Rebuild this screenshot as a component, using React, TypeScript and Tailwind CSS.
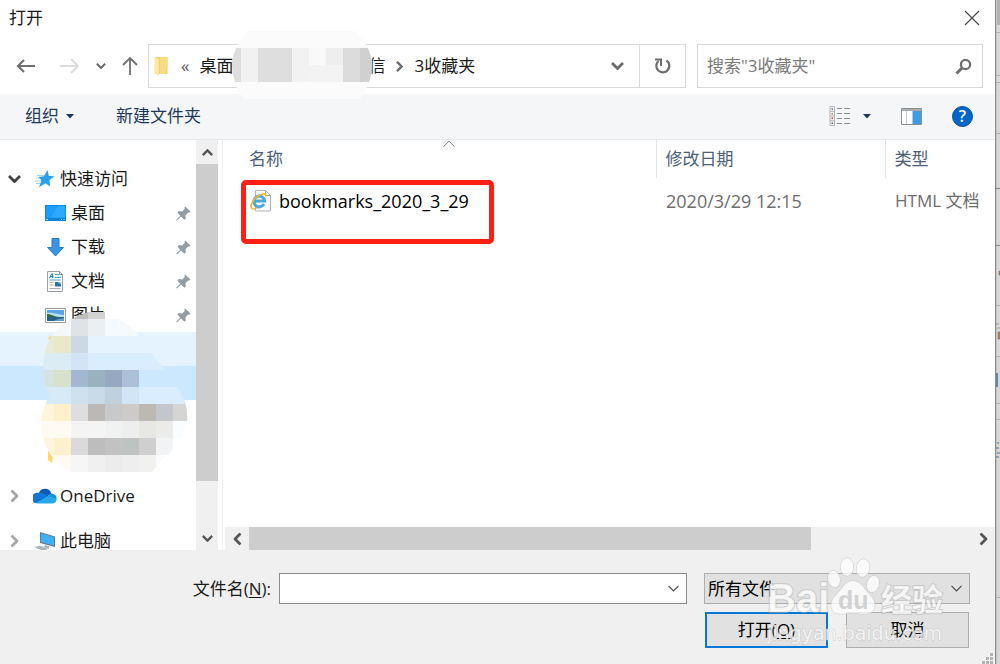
import type { ReactNode } from 'react';

type IconProps = { className?: string };

const quickItems: { label: string; icon: ReactNode }[] = [
  { label: '桌面', icon: <DesktopIcon /> },
  { label: '下载', icon: <DownloadIcon /> },
  { label: '文档', icon: <DocumentIcon /> },
  { label: '图片', icon: <PictureIcon /> },
];

// x, y, width, fill: one run of equal cells in the censored part of the tree
const treeMosaic: [number, number, number, string][] = [
  [20, 0, 10, '#d3d3d3'], [30, 0, 17, '#c1bfbd'], [47, 0, 17, '#d3d3d3'],
  [0, 7, 30, '#f4f6f8'], [30, 7, 17, '#dfe3e6'], [47, 7, 17, '#ebeff2'], [64, 7, 84, '#f5faff'],
  [0, 24, 13, '#e7ecd9'], [13, 24, 17, '#e9e8c9'], [30, 24, 17, '#ccd9e5'], [47, 24, 101, '#e5f3ff'],
  [0, 41, 30, '#dbecf5'], [30, 41, 17, '#d3e5f4'], [47, 41, 101, '#d9edff'],
  [0, 58, 13, '#d5e3df'], [13, 58, 17, '#d8e1cc'], [30, 58, 17, '#a3b8d0'], [47, 58, 17, '#9ab1c0'],
  [64, 58, 17, '#96a9c1'], [81, 58, 17, '#acc1d9'], [98, 58, 50, '#cce8ff'],
  [0, 75, 30, '#d8eaf5'], [30, 75, 17, '#cfe0ef'], [47, 75, 17, '#c9dae8'], [64, 75, 17, '#bfd1df'],
  [81, 75, 17, '#d1e5f6'], [98, 75, 50, '#d9edff'],
  [0, 92, 13, '#fff5db'], [13, 92, 17, '#fdf0cb'], [30, 92, 17, '#dedede'], [47, 92, 17, '#bbb8b5'],
  [64, 92, 17, '#c8c9cb'], [81, 92, 17, '#cdcbc9'], [98, 92, 17, '#bcb9b5'], [115, 92, 17, '#c3c7cb'], [132, 92, 16, '#d5d5d4'],
  [0, 109, 30, '#fffaf2'], [30, 109, 34, '#f4f4f4'], [64, 109, 17, '#eff2f1'], [81, 109, 17, '#eeeeee'],
  [98, 109, 17, '#e7e7e4'], [115, 109, 17, '#ebebea'], [132, 109, 16, '#fafdff'],
  [0, 126, 13, '#fff5df'], [13, 126, 17, '#fdf0cd'], [30, 126, 17, '#dadada'], [47, 126, 17, '#bdbdbd'],
  [64, 126, 17, '#c2c2c2'], [81, 126, 17, '#bec2c0'], [98, 126, 17, '#cfcfcf'], [115, 126, 17, '#f1f3f5'],
  [0, 143, 30, '#fffbf4'], [30, 143, 17, '#f6f6f6'], [47, 143, 17, '#f0f0f0'], [64, 143, 17, '#ececec'],
  [81, 143, 17, '#eeeeee'], [98, 143, 17, '#f1f2ef'], [115, 143, 17, '#f9fbfd'],
];

const pathMosaic: [number, number, number, number, string][] = [
  [0, 17, 9, 34, '#dedede'], [9, 17, 17, 34, '#f1f1f1'], [26, 17, 34, 34, '#dedede'],
  [60, 17, 17, 34, '#f2f2f2'], [77, 17, 17, 17, '#f9f9f9'], [77, 34, 34, 17, '#f3f3f3'],
  [94, 17, 17, 17, '#eeeeee'], [111, 17, 17, 34, '#dcdcdc'], [128, 17, 12, 34, '#d0d0d0'],
];

export default function App() {
  return (
    <div className="flex h-screen min-h-[480px] overflow-hidden bg-white font-['Open_Sans','Noto_Sans_CJK_SC',sans-serif] text-[17px] leading-6 text-[#1a1a1a]">
      <div className="relative flex min-w-0 flex-1 flex-col">
        <TitleBar />
        <NavBar />
        <Toolbar />
        <div className="flex min-h-0 flex-1">
          <Sidebar />
          <FileList />
        </div>
        <Footer />
      </div>
      <WindowBehind />
    </div>
  );
}

function TitleBar() {
  return (
    <header className="flex h-9 shrink-0 items-center justify-between pr-[15px] pl-[9px]">
      <h1>打开</h1>
      <button aria-label="关闭" className="p-0">
        <svg width="16" height="16" viewBox="0 0 16 16" stroke="#444" strokeWidth="1.1">
          <path d="M1 1l14 14M15 1L1 15" />
        </svg>
      </button>
    </header>
  );
}

function NavBar() {
  return (
    <nav className="flex h-[58px] shrink-0 items-center pt-2 pr-3 pb-[6px]">
      <div className="flex w-[148px] shrink-0 items-center pl-4">
        <button aria-label="后退">
          <svg width="20" height="18" viewBox="0 0 20 18" fill="none" stroke="#707070" strokeWidth="2.2">
            <path d="M19 9H2M8 3L2 9l6 6" />
          </svg>
        </button>
        <button aria-label="前进" className="ml-6">
          <svg width="20" height="18" viewBox="0 0 20 18" fill="none" stroke="#dcdcdc" strokeWidth="2">
            <path d="M0 9h18M11 2l7 7-7 7" />
          </svg>
        </button>
        <button aria-label="最近浏览的位置" className="ml-4">
          <Chevron className="h-[6px] w-[10px] text-[#6a6a6a]" />
        </button>
        <button aria-label="上移" className="ml-4">
          <svg width="16" height="20" viewBox="0 0 16 20" fill="none" stroke="#707070" strokeWidth="1.8">
            <path d="M8 19V2M1 9l7-7 7 7" />
          </svg>
        </button>
      </div>

      <div className="relative flex h-[44px] min-w-0 flex-1 items-center border border-[#d9d9d9]">
        <svg className="ml-[5px] shrink-0" width="15" height="20" viewBox="0 0 15 20">
          <path d="M1 1h12.500v17H1z" fill="#f5ce69" />
          <path d="M6 1h7.500v11H12v6H6z" fill="#f8dc84" />
          <path d="M0.500 1L5 3.500V20L0.500 17.500z" fill="#ffe9a2" />
        </svg>
        <span className="ml-3 leading-5 text-[#555]">«</span>
        <span className="ml-[10px]">桌面</span>
        <span className="ml-[135px]">信</span>
        <Chevron className="mx-[9px] h-[7px] w-[11px] -rotate-90 text-[#6a6a6a]" />
        <span>3收藏夹</span>
        <button aria-label="展开地址" className="ml-auto px-[15px]">
          <Chevron className="h-[8px] w-[13px] text-[#6a6a6a]" />
        </button>
        <button aria-label="刷新" className="flex h-full w-[46px] items-center justify-center border-l border-[#d9d9d9]">
          <svg width="18" height="18" viewBox="0 0 18 18" fill="none" stroke="#6d6d6d" strokeWidth="2.2">
            <path d="M12.500 3.500A6.500 6.500 0 1 1 4.500 4" />
            <path d="M1 2.500h6V9" strokeWidth="2" />
          </svg>
        </button>
        <svg className="absolute -top-[14px] left-[83px]" width="140" height="68" viewBox="0 0 140 68">
          <clipPath id="path-blob">
            <path d="M16 0H124Q140 18 140 34Q140 52 128 68H12Q0 52 0 34Q0 18 16 0z" />
          </clipPath>
          <g clipPath="url(#path-blob)" shapeRendering="crispEdges">
            <path d="M0 0h140v68H0z" fill="#fbfbfb" />
            {pathMosaic.map(([x, y, w, h, fill]) => (
              <rect key={`${x}-${y}`} x={x} y={y} width={w} height={h} fill={fill} />
            ))}
          </g>
        </svg>
      </div>

      <label className="ml-[11px] flex h-[44px] w-[286px] shrink-0 items-center border border-[#d9d9d9] pr-[10px] pl-[9px]">
        <input
          type="text"
          aria-label="搜索"
          placeholder={'搜索"3收藏夹"'}
          className="min-w-0 flex-1 bg-transparent outline-none placeholder:text-[#7a7a7a]"
        />
        <svg width="17" height="17" viewBox="0 0 17 17" fill="none" stroke="#6d6d6d">
          <circle cx="10.500" cy="6.500" r="4.600" strokeWidth="2.200" />
          <path d="M7 10L1.500 15.500" strokeWidth="3" />
        </svg>
      </label>
    </nav>
  );
}

function Toolbar() {
  return (
    <div className="flex h-[46px] shrink-0 items-center border-b border-[#e6e8ea] bg-[#f4f6f8] pr-[22px] pb-px pl-[25px] text-[#1e395b]">
      <button className="flex items-center gap-[7px]">
        组织
        <Triangle />
      </button>
      <button className="ml-[42px]">新建文件夹</button>
      <button aria-label="更改视图" className="ml-auto flex items-center gap-3">
        <svg width="22" height="20" viewBox="0 0 22 20" fill="none">
          <path d="M1 .5h4.500v19H1zM1 5.300h4.500M1 10h4.500M1 14.700h4.500" stroke="#b5b5b5" />
          <path d="M8 2.500h5M15 2.500h6M8 7.500h5M15 7.500h6M8 12.500h5M15 12.500h6M8 17.500h5M15 17.500h6" stroke="#8d8d8d" />
          <path d="M2.500 2.200h1.500v1.500H2.500z" fill="#3c78b4" />
          <path d="M2.500 7h1.500v1.500H2.500z" fill="#b08a4a" />
          <path d="M2.500 11.500h1.500v1.500H2.500z" fill="#d0401c" />
          <path d="M2.500 16.500h1.500V18H2.500z" fill="#4a6a8a" />
        </svg>
        <Triangle />
      </button>
      <button aria-label="预览窗格" className="ml-[30px]">
        <svg width="21" height="17" viewBox="0 0 21 17">
          <path d="M.5.5h20v16H.5z" fill="#fff" stroke="#8a8f94" />
          <path d="M1 1h19v2H1z" fill="#a9adb1" />
          <path d="M5.500 3v13" stroke="#c5c8ca" />
          <path d="M11.500 3H20v13h-8.500z" fill="#3f9be6" />
        </svg>
      </button>
      <button
        aria-label="帮助"
        className="ml-[30px] flex size-[21px] items-center justify-center rounded-full border border-[#0b4f97] bg-[#0066cc] text-base leading-5 font-semibold text-white"
      >
        ?
      </button>
    </div>
  );
}

function Sidebar() {
  return (
    <aside className="flex w-[223px] shrink-0 border-r border-[#f0f0f0] pr-1">
      <div className="relative min-w-0 flex-1 overflow-hidden pt-[22px]">
        <TreeRoot label="快速访问" icon={<StarIcon />} open />
        <ul>
          {quickItems.map((item) => (
            <li key={item.label} className="flex h-[34px] items-center pr-[5px] pl-[45px]">
              <span className="flex w-[26px] items-center">{item.icon}</span>
              <span className="flex-1">{item.label}</span>
              <PinIcon />
            </li>
          ))}
          <li className="h-[34px] bg-[#e5f3ff]" />
          <li className="h-[34px] bg-[#cce8ff]" />
        </ul>
        <div className="mt-[79px] flex flex-col gap-[11px]">
          <TreeRoot label="OneDrive" icon={<CloudIcon />} />
          <TreeRoot label="此电脑" icon={<ComputerIcon />} />
        </div>
        <svg className="absolute top-[172px] left-[41px]" width="148" height="160" viewBox="0 0 148 160">
          <clipPath id="tree-blob">
            <path d="M47 0H64L76 7Q88 11 97 24V41H111L124 58V75H136Q148 92 146 109L141 126H132V137Q120 148 111 160H30Q0 144 0 109Q2 94 9 83Q0 68 3 45Q6 14 47 0z" />
          </clipPath>
          <path d="M7 26l4-3v8zM7 138l5 6-1 7-4-3z" fill="#fbd96b" />
          <g clipPath="url(#tree-blob)" shapeRendering="crispEdges">
            {treeMosaic.map(([x, y, w, fill]) => (
              <rect key={`${x}-${y}`} x={x} y={y} width={w} height={17} fill={fill} />
            ))}
          </g>
        </svg>
      </div>
      <div className="flex w-[22px] flex-col bg-[#f0f0f0]">
        <button aria-label="向上滚动" className="flex h-6 items-center justify-center">
          <Chevron className="h-[7px] w-[11px] rotate-180 text-[#555]" />
        </button>
        <div className="flex-1">
          <div className="h-7/8 bg-[#cdcdcd]" />
        </div>
        <button aria-label="向下滚动" className="flex h-6 items-center justify-center">
          <Chevron className="h-[7px] w-[11px] text-[#555]" />
        </button>
      </div>
    </aside>
  );
}

function TreeRoot({ label, icon, open }: { label: string; icon: ReactNode; open?: boolean }) {
  return (
    <div className="flex h-[34px] items-center pl-2">
      <button aria-label={label} className="flex w-[13px] justify-center">
        {open ? (
          <Chevron className="h-[8px] w-[13px] text-[#404040]" />
        ) : (
          <Chevron className="h-[8px] w-[13px] -rotate-90 text-[#a6a6a6]" />
        )}
      </button>
      <span className="ml-3 flex w-[27px] items-center">{icon}</span>
      <span>{label}</span>
    </div>
  );
}

function FileList() {
  return (
    <main className="relative flex min-w-0 flex-1 flex-col pl-[2px]">
      <table className="w-full table-fixed text-left">
        <thead>
          <tr className="h-[38px] text-[#4c607a]">
            <th className="pl-6 font-normal">名称</th>
            <th className="w-[229px] border-l border-[#e5e5e5] pl-[9px] font-normal">修改日期</th>
            <th className="w-[110px] border-l border-[#e5e5e5] pl-[9px] font-normal">类型</th>
          </tr>
        </thead>
        <tbody>
          <tr className="h-[46px] text-[#6d6d6d]">
            <td className="pl-[25px] text-lg leading-6 text-black">
              <span className="flex items-center gap-[7px]">
                <HtmlFileIcon />
                bookmarks_2020_3_29
              </span>
            </td>
            <td className="pl-[10px] text-lg leading-6">2020/3/29 12:15</td>
            <td className="pl-[10px] whitespace-nowrap">HTML 文档</td>
          </tr>
        </tbody>
      </table>
      <svg className="absolute top-0 left-[220px]" width="12" height="8" viewBox="0 0 12 8" fill="none" stroke="#7d7d7d">
        <path d="M.7 6.500L6 1.200l5.300 5.300" />
      </svg>
      <div className="absolute top-10 left-[18px] h-16 w-[253px] rounded-[5px] border-[5px] border-[#ff2015]" />
      <div className="mt-auto flex h-[23px] bg-[#f0f0f0]">
        <button aria-label="向左滚动" className="flex w-6 items-center justify-center">
          <Chevron className="h-[8px] w-[13px] rotate-90 text-[#555]" />
        </button>
        <div className="flex-1">
          <div className="h-full w-7/9 bg-[#cdcdcd]" />
        </div>
        <button aria-label="向右滚动" className="flex w-6 items-center justify-center">
          <Chevron className="h-[8px] w-[13px] -rotate-90 text-[#555]" />
        </button>
      </div>
    </main>
  );
}

function Footer() {
  return (
    <footer className="relative flex shrink-0 flex-col gap-2 bg-[#f0f0f0] pt-[23px] pr-[25px] pb-4">
      <div className="flex items-center">
        <label htmlFor="filename" className="ml-auto shrink-0">
          文件名(<u className="underline-offset-2">N</u>):
        </label>
        <div className="relative ml-2 w-[408px]">
          <input
            id="filename"
            type="text"
            className="block h-[31px] w-full border border-[#8c8c8c] bg-white pr-6 pl-1 outline-none"
          />
          <ThinChevron className="absolute top-3 right-2" />
        </div>
        <div className="relative ml-[17px] w-[266px]">
          <select
            aria-label="文件类型"
            className="block h-[31px] w-full appearance-none border border-[#adadad] bg-[#e1e1e1] pl-[3px] text-black outline-none"
          >
            <option>所有文件</option>
          </select>
          <ThinChevron className="absolute top-3 right-2" />
        </div>
      </div>
      <div className="flex justify-end gap-[18px] pr-px">
        <button className="h-9 w-[123px] border-2 border-[#0078d7] bg-[#e1e1e1] text-black">
          打开(<u className="underline-offset-2">O</u>)
        </button>
        <button className="h-9 w-[123px] border border-[#adadad] bg-[#e1e1e1] text-black">取消</button>
      </div>
      <Watermark />
      <svg className="absolute right-[2px] bottom-0" width="11" height="11" viewBox="0 0 11 11" fill="#b5b5b5">
        <path d="M8 0h3v3H8zM4 4h3v3H4zM8 4h3v3H8zM0 8h3v3H0zM4 8h3v3H4zM8 8h3v3H8z" />
      </svg>
    </footer>
  );
}

function Watermark() {
  return (
    <svg
      className="pointer-events-none absolute right-[46px] bottom-3 font-['Liberation_Sans','Noto_Sans_CJK_SC',sans-serif]"
      width="182"
      height="96"
      viewBox="0 0 182 96"
      fill="#fff"
      fillOpacity="0.75"
      stroke="#b0b0b0"
      strokeOpacity="0.5"
      paintOrder="stroke"
    >
      <ellipse cx="67" cy="23" rx="6" ry="8.500" transform="rotate(-12 67 23)" />
      <ellipse cx="80" cy="11" rx="6.500" ry="9" />
      <ellipse cx="96" cy="12" rx="6.500" ry="9" transform="rotate(10 96 12)" />
      <ellipse cx="106" cy="28" rx="6" ry="8.500" transform="rotate(15 106 28)" />
      <path d="M86 25c8 0 11 8 17 14 8 8 6 19-5 19-5 0-8-1-12-1s-7 1-12 1c-11 0-13-11-5-19 6-6 9-14 17-14z" />
      <text x="0" y="56" fontSize="40" fontWeight="700" strokeWidth="2">Bai</text>
      <text x="71" y="53" fontSize="25" fontWeight="700" fill="#c4c4c4" stroke="none">du</text>
      <text x="114" y="55" fontSize="31" fontWeight="700" strokeWidth="2">经验</text>
      <text x="0" y="84" fontSize="19" strokeWidth="1" className="font-['DejaVu_Sans',sans-serif]">jingyan.baidu.com</text>
    </svg>
  );
}

// Sliver of the browser window that shows past the right edge of the dialog
function WindowBehind() {
  return (
    <svg className="h-full w-[5px] shrink-0" viewBox="0 0 5 664" preserveAspectRatio="none">
      <path d="M0 0h5v664H0z" fill="#d8d8d8" />
      <path d="M0 0h5v25H0z" fill="#b4b4b4" />
      <path d="M0 0h1v664H0z" fill="#8e8e8e" />
      <path d="M1 0h1v664H1z" fill="#c2c2c2" />
      <path d="M1 32.500h4M1 75.500h4M1 82.500h4M1 133.500h4M1 305.500h4M1 356.500h4M1 403.500h4M1 419.500h4M1 597.500h4" stroke="#b0b0b0" />
      <path d="M0 188.500h5M0 245.500h5" stroke="#858585" />
      <path d="M4 271h1v4H4zM1 324h3M2 328h3M3 332h2v7H3z" fill="#b88a4a" stroke="#667" strokeWidth=".5" />
      <path d="M1 373h2v14H1z" fill="#5b87b0" />
      <path d="M2 443h2M1 448h3M2 453h3M1 457h3" stroke="#4f6f92" />
    </svg>
  );
}

function Chevron({ className }: IconProps) {
  return (
    <svg className={className} viewBox="0 0 13 8" fill="none" stroke="currentColor" strokeWidth="2.800">
      <path d="M1 1l5.500 5.500L12 1" />
    </svg>
  );
}

function ThinChevron({ className }: IconProps) {
  return (
    <svg className={className} width="11" height="7" viewBox="0 0 11 7" fill="none" stroke="#4a4a4a" strokeWidth="1.200">
      <path d="M.5.800l5 5 5-5" />
    </svg>
  );
}

function Triangle() {
  return (
    <svg width="8" height="5" viewBox="0 0 8 5" fill="#1e395b">
      <path d="M0 0h8L4 4.500z" />
    </svg>
  );
}

function StarIcon() {
  return (
    <svg className="ml-[2px]" width="20" height="18" viewBox="0 0 20 18">
      <path d="M2 5.500h8M1 8h8M0 11h7M1 13.500h5" stroke="#9bd2f5" strokeWidth="1" />
      <path d="M12.500 0l1.300 6 5.700.3-5 3.700.5 6.500-4.500-3.300-6.500 4 2.500-6.700L3.500 7l5.500-.700z" fill="#2aa0ea" />
    </svg>
  );
}

function DesktopIcon() {
  return (
    <svg width="21" height="16" viewBox="0 0 21 16">
      <path d="M0 0h21v16H0z" fill="#0d83dc" />
      <path d="M.8.800h19.400v12H.8z" fill="#1b9dfb" />
      <path d="M13 .800h7.200v12H6z" fill="#2fa9ff" />
      <path d="M1 14.500h2M16 14.500h1M18.500 14.500h1" stroke="#b9e0fb" />
    </svg>
  );
}

function DownloadIcon() {
  return (
    <svg width="21" height="19" viewBox="0 0 21 19">
      <path d="M7 .5h7v9h4.500l-8 8.500-8-8.500H7z" fill="#3a94e0" stroke="#2a7fca" />
    </svg>
  );
}

function DocumentIcon() {
  return (
    <svg width="21" height="21" viewBox="0 0 21 21" fill="none">
      <path d="M2.500.5h12l3 3v17h-15z" fill="#fdfdfd" stroke="#9da0a4" />
      <path d="M14.500.5v3h3" stroke="#8d9094" />
      <path d="M4.500 7l2.200-4h1v4M5.500 5.500h2" stroke="#1c86d1" strokeWidth="1.200" />
      <path d="M10 3.500h4M10 6.500h6M4.500 9h11" stroke="#42a5df" />
      <path d="M4.500 11.500h4M4.500 14h4M4.500 17.500h11" stroke="#a9adb1" />
      <path d="M10 11h6v4.500h-6z" fill="#2f6fa8" />
      <path d="M12.500 11H16v2.500z" fill="#9cc9ec" />
    </svg>
  );
}

function PictureIcon() {
  return (
    <svg width="21" height="15" viewBox="0 0 21 15">
      <path d="M.5.5h20v14H.5z" fill="#fff" stroke="#9a9a9a" />
      <path d="M2 2h17v11H2z" fill="#5aa5e8" />
      <path d="M2 5c5-1 9 1 17 2v2H2z" fill="#b8dcf2" />
      <path d="M2 6c4 0 6 2.500 12 3H2z" fill="#2f6b3a" />
      <path d="M2 9h17v4H2z" fill="#28618f" />
      <path d="M9 13c3-2 6-2.500 10-3v3z" fill="#5f9fc9" />
    </svg>
  );
}

function PinIcon() {
  return (
    <svg width="15" height="15" viewBox="0 0 15 15" fill="#929da6">
      <path d="M9.200.5l5.300 5-1.300 1.200-1-.2-2.700 2.700.3 3.300-1.500 1.300L5 10.500 1 14.500l-.8-.7 4-4L1.500 6.500 2.800 5l3.500.400L8.800 2.700 8.500 1.300z" />
    </svg>
  );
}

function CloudIcon() {
  return (
    <svg width="24" height="16" viewBox="0 0 24 16">
      <path d="M6 5a6.500 6.500 0 0 1 12.300.5L12 10 5 6z" fill="#0a5cb4" />
      <path d="M5.500 4.800c3-.6 5 .5 6.500 1.400L16 9 3 15.300A5.300 5.300 0 0 1 5.500 4.800z" fill="#0f78d4" />
      <path d="M18.300 5.500c4 .2 5.700 3.200 5.300 6L15 8.500c.8-1.600 1.800-2.800 3.300-3z" fill="#1490df" />
      <path d="M15 8l8.600 3.500c-.4 2.500-2 4-4.300 4H5.500c-1.200 0-2 0-2.800-.500z" fill="#28a8ea" />
    </svg>
  );
}

function ComputerIcon() {
  return (
    <svg width="23" height="19" viewBox="0 0 23 19">
      <path d="M7 0l15 4.500V15L7 11z" fill="#5f7a90" />
      <path d="M8 1.300l13 4v8.200L8 10z" fill="#3fb0f5" />
      <path d="M12 13l-1 3 4 1 2-2.500z" fill="#a8b4bd" />
      <path d="M1 15l6-1.500 9 3-6 2.500z" fill="#c3ccd3" />
      <path d="M3 15.500l9 2.500M5 14.700l9 2.500" stroke="#8c99a3" strokeWidth=".7" />
    </svg>
  );
}

function HtmlFileIcon() {
  return (
    <svg width="22" height="22" viewBox="0 0 22 22" fill="none">
      <path d="M5.500.5h10l5 5v15.500h-15z" fill="#fcfcfc" stroke="#b5b5b5" />
      <path d="M15.500.5v5h5" stroke="#a5a5a5" />
      <path d="M14 14A5.400 5.400 0 1 1 14.600 11H5" stroke="#4aa8e0" strokeWidth="3" />
      <path d="M1.800 18.500C-1 15 5 5.500 13.500 4c2-.3 2.500.8 1.800 2.500" stroke="#f0b824" strokeWidth="1.700" />
      <path d="M1.800 18.500c1.200 1 3.200.300 5-.8" stroke="#f0b824" strokeWidth="1.500" />
    </svg>
  );
}
